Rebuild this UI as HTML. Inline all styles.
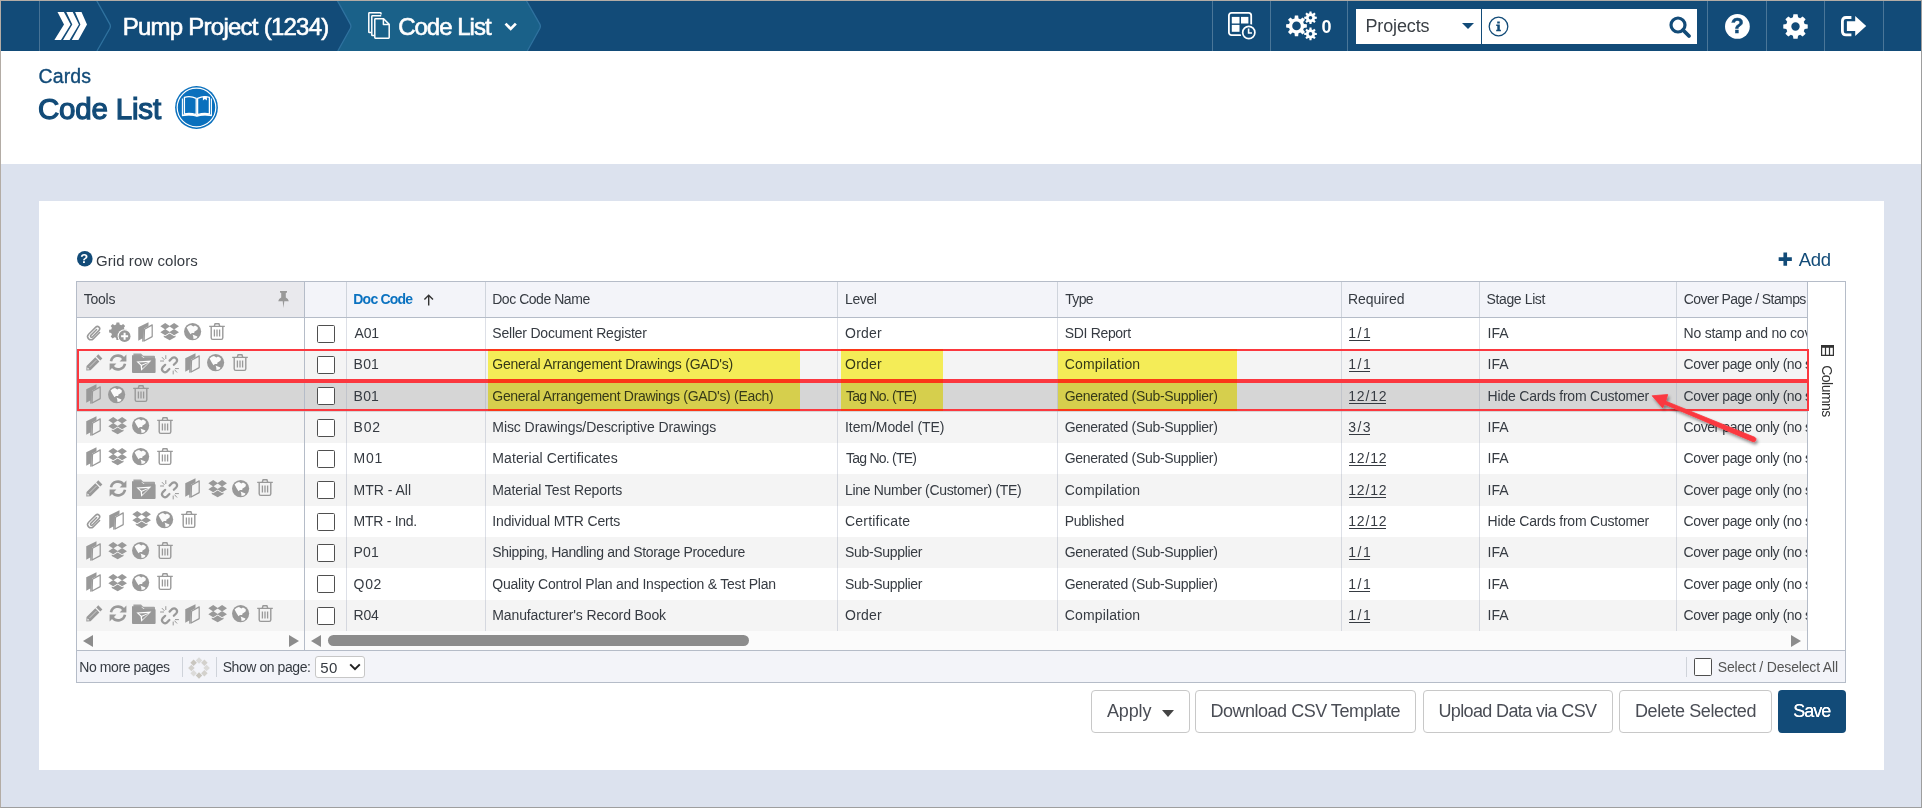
<!DOCTYPE html>
<html lang="en">
<head>
<meta charset="utf-8">
<title>Code List - Pump Project (1234)</title>
<style>
html,body{margin:0;padding:0;}
body{width:1922px;height:808px;position:relative;overflow:hidden;background:#dce2ee;font-family:"Liberation Sans",sans-serif;}
.a{position:absolute;box-sizing:border-box;}
.t{position:absolute;white-space:pre;font-family:"Liberation Sans",sans-serif;}
svg{position:absolute;overflow:visible;}
.u{text-decoration:underline;text-underline-offset:2px;}
.btn{position:absolute;box-sizing:border-box;background:#fff;border:1px solid #c8c8c8;border-radius:4px;}
.cb{position:absolute;box-sizing:border-box;width:18px;height:18px;background:#fff;border:1.4px solid #4f4f4f;border-radius:1.6px;}

</style>
</head>
<body>
<div class="a" style="left:0px;top:0px;width:1922px;height:51px;background:#124b78;"></div>
<svg class="a" style="left:0px;top:0px" width="1922" height="51" viewBox="0 0 1922 51" ><path d="M337,0 H526 L539.7,23.9 Q541,26.2 539.8,28.5 L527.3,51 H337.8 L350.3,28.5 Q351.5,26.2 350.2,23.9Z" fill="#1a6189"/><path d="M39.5,0V51" stroke="rgba(255,255,255,.22)" stroke-width="1" fill="none"/><path d="M96.3,0 L109.7,23.9 Q111,26.2 109.8,28.5 L97,51 M337,0 L350.2,23.9 Q351.5,26.2 350.3,28.5 L337.8,51 M526,0 L539.7,23.9 Q541,26.2 539.8,28.5 L527.3,51" stroke="#2f729f" stroke-width="1.3" fill="none" stroke-linejoin="round"/><path d="M1212.5,0V51" stroke="rgba(255,255,255,.24)" stroke-width="1"/><path d="M1270.5,0V51" stroke="rgba(255,255,255,.24)" stroke-width="1"/><path d="M1347.5,0V51" stroke="rgba(255,255,255,.24)" stroke-width="1"/><path d="M1707.5,0V51" stroke="rgba(255,255,255,.24)" stroke-width="1"/><path d="M1766.5,0V51" stroke="rgba(255,255,255,.24)" stroke-width="1"/><path d="M1824.5,0V51" stroke="rgba(255,255,255,.24)" stroke-width="1"/><path d="M1883.5,0V51" stroke="rgba(255,255,255,.24)" stroke-width="1"/><polygon fill="#fff" points="57.5,12 63.9,12 70.6,24.6 61.0,40 54.4,40 63.99999999999999,24.6"/><polygon fill="#fff" points="66.3,12 72.7,12 78.9,24.6 69.6,40 63.0,40 72.30000000000001,24.6"/><polygon fill="#fff" points="75.1,12 81.5,12 87.0,24.6 78.39999999999999,40 71.8,40 80.4,24.6"/></svg>
<span class="t" style="left:122.70px;top:9.50px;font-size:24px;letter-spacing:-0.750px;line-height:34px;color:#fff;-webkit-text-stroke:0.6px #fff;">Pump Project (1234)</span>
<svg class="a" style="left:368px;top:12px" width="22" height="27" viewBox="0 0 22 27" ><g fill="none" stroke="#fff" stroke-width="1.5" stroke-linejoin="round"><path d="M3.2,20.5 H1.4 Q0.8,20.5 0.8,19.9 V1.4 Q0.8,0.8 1.4,0.8 H12.4 Q13,0.8 13,1.4 V2.6"/><path d="M6.2,23.5 H4.4 Q3.8,23.5 3.8,22.9 V4.4 Q3.8,3.8 4.4,3.8 H13.2"/><path d="M7.4,6.8 H15.6 L21.2,12.4 V25.6 Q21.2,26.2 20.6,26.2 H7.4 Q6.8,26.2 6.8,25.6 V7.4 Q6.8,6.8 7.4,6.8Z" fill="#1a6189"/><path d="M15.4,7 V12.6 H21"/></g></svg>
<span class="t" style="left:398.20px;top:9.50px;font-size:24px;letter-spacing:-1.000px;line-height:34px;color:#fff;-webkit-text-stroke:0.6px #fff;">Code List</span>
<svg class="a" style="left:504px;top:21.6px" width="13.4" height="9.4" viewBox="0 0 13 9" ><path d="M1.5,1.5 L6.5,6.6 L11.5,1.5" fill="none" stroke="#fff" stroke-width="2.7"/></svg>
<svg class="a" style="left:1228px;top:11.5px" width="29" height="29" viewBox="0 0 29 29" ><rect x="0.9" y="0.9" width="22.3" height="22.2" rx="2.6" fill="none" stroke="#fff" stroke-width="1.8"/><rect x="3.8" y="4.9" width="7.7" height="6.6" fill="#fff"/><rect x="13" y="4.9" width="7.4" height="6.6" fill="#fff"/><rect x="3.8" y="12.9" width="7.7" height="6.9" fill="#fff"/><path d="M3.8,4.9 h3 v1.2 h-3Z M13,4.9 h3 v1.2 h-3Z M3.8,12.9 h3 v1.2 h-3Z" fill="#124b78" opacity=".0"/><circle cx="20.8" cy="20.5" r="8.4" fill="#124b78"/><circle cx="20.8" cy="20.5" r="6.1" fill="none" stroke="#fff" stroke-width="1.7"/><path d="M20.6,16.6 V21 H24" fill="none" stroke="#fff" stroke-width="1.6"/></svg>
<svg class="a" style="left:1286px;top:11px" width="31" height="29" viewBox="0 0 31 29" ><path fill="#fff" fill-rule="evenodd" d="M17.94,12.91 L20.87,13.24 L20.87,16.56 L17.94,16.89 L17.17,18.75 L19.00,21.06 L16.66,23.40 L14.35,21.57 L12.49,22.34 L12.16,25.27 L8.84,25.27 L8.51,22.34 L6.65,21.57 L4.34,23.40 L2.00,21.06 L3.83,18.75 L3.06,16.89 L0.13,16.56 L0.13,13.24 L3.06,12.91 L3.83,11.05 L2.00,8.74 L4.34,6.40 L6.65,8.23 L8.51,7.46 L8.84,4.53 L12.16,4.53 L12.49,7.46 L14.35,8.23 L16.66,6.40 L19.00,8.74 L17.17,11.05Z M6.20,14.90a4.30,4.30 0 1,0 8.60,0a4.30,4.30 0 1,0 -8.60,0Z"/><path fill="#fff" fill-rule="evenodd" d="M28.94,5.61 L30.82,5.79 L30.82,7.81 L28.94,7.99 L28.48,9.10 L29.68,10.56 L28.26,11.98 L26.80,10.78 L25.69,11.24 L25.51,13.12 L23.49,13.12 L23.31,11.24 L22.20,10.78 L20.74,11.98 L19.32,10.56 L20.52,9.10 L20.06,7.99 L18.18,7.81 L18.18,5.79 L20.06,5.61 L20.52,4.50 L19.32,3.04 L20.74,1.62 L22.20,2.82 L23.31,2.36 L23.49,0.48 L25.51,0.48 L25.69,2.36 L26.80,2.82 L28.26,1.62 L29.68,3.04 L28.48,4.50Z M22.70,6.80a1.80,1.80 0 1,0 3.60,0a1.80,1.80 0 1,0 -3.60,0Z"/><path fill="#fff" fill-rule="evenodd" d="M28.94,21.71 L30.82,21.89 L30.82,23.91 L28.94,24.09 L28.48,25.20 L29.68,26.66 L28.26,28.08 L26.80,26.88 L25.69,27.34 L25.51,29.22 L23.49,29.22 L23.31,27.34 L22.20,26.88 L20.74,28.08 L19.32,26.66 L20.52,25.20 L20.06,24.09 L18.18,23.91 L18.18,21.89 L20.06,21.71 L20.52,20.60 L19.32,19.14 L20.74,17.72 L22.20,18.92 L23.31,18.46 L23.49,16.58 L25.51,16.58 L25.69,18.46 L26.80,18.92 L28.26,17.72 L29.68,19.14 L28.48,20.60Z M22.70,22.90a1.80,1.80 0 1,0 3.60,0a1.80,1.80 0 1,0 -3.60,0Z"/></svg>
<span class="t" style="left:1321.40px;top:14.90px;font-size:18px;font-weight:700;line-height:25px;color:#fff;">0</span>
<div class="a" style="left:1356px;top:9px;width:125px;height:35px;background:#fff;"></div>
<div class="a" style="left:1482px;top:9px;width:215px;height:35px;background:#fff;"></div>
<span class="t" style="left:1365.50px;top:13.50px;font-size:18px;letter-spacing:-0.143px;line-height:25px;color:#3a3f45;">Projects</span>
<svg class="a" style="left:1462px;top:23px" width="12" height="6" viewBox="0 0 12 6" ><path d="M0,0 H12 L6,6Z" fill="#124b78"/></svg>
<svg class="a" style="left:1487.5px;top:15.5px" width="21" height="21" viewBox="0 0 21 21" ><circle cx="10.5" cy="10.5" r="9.3" fill="none" stroke="#124b78" stroke-width="1.3"/><path d="M8.2,8.6 H11.8 V13.8 H12.9 V15.2 H8.2 V13.8 H9.3 V10 H8.2Z M9.2,5.4 H11.8 V7.6 H9.2Z" fill="#124b78"/></svg>
<svg class="a" style="left:1669px;top:16px" width="22" height="22" viewBox="0 0 22 22" ><circle cx="9" cy="9" r="7" fill="none" stroke="#124b78" stroke-width="3.2"/><path d="M14,14 L20,20" stroke="#124b78" stroke-width="3.8" stroke-linecap="round"/></svg>
<svg class="a" style="left:1724.8px;top:13.6px" width="24.8" height="24.8" viewBox="0 0 25 25" ><circle cx="12.5" cy="12.5" r="12.5" fill="#fff"/></svg>
<span class="t" style="left:1730.70px;top:11.40px;font-size:21.5px;font-weight:700;line-height:30px;color:#124b78;-webkit-text-stroke:0.4px #124b78;">?</span>
<svg class="a" style="left:1782.9px;top:13.5px" width="25" height="25" viewBox="0 0 25 25" ><path fill="#fff" fill-rule="evenodd" d="M21.65,9.94 L24.72,10.41 L24.72,14.59 L21.65,15.06 L20.78,17.15 L22.62,19.66 L19.66,22.62 L17.15,20.78 L15.06,21.65 L14.59,24.72 L10.41,24.72 L9.94,21.65 L7.85,20.78 L5.34,22.62 L2.38,19.66 L4.22,17.15 L3.35,15.06 L0.28,14.59 L0.28,10.41 L3.35,9.94 L4.22,7.85 L2.38,5.34 L5.34,2.38 L7.85,4.22 L9.94,3.35 L10.41,0.28 L14.59,0.28 L15.06,3.35 L17.15,4.22 L19.66,2.38 L22.62,5.34 L20.78,7.85Z M8.30,12.50a4.20,4.20 0 1,0 8.40,0a4.20,4.20 0 1,0 -8.40,0Z"/></svg>
<svg class="a" style="left:1841px;top:14px" width="26" height="23" viewBox="0 0 26 23" ><path d="M10.4,3.5 H5 Q1.4,3.5 1.4,7.1 V17.2 Q1.4,20.8 5,20.8 H10.4" fill="none" stroke="#fff" stroke-width="2.8"/><path d="M5.9,7.3 H14.2 V2 L25.2,12 L14.2,22 V16.9 H5.9Z" fill="#fff"/></svg>
<div class="a" style="left:0px;top:51px;width:1922px;height:113px;background:#fff;"></div>
<span class="t" style="left:38.50px;top:62.80px;font-size:19.5px;letter-spacing:0.125px;line-height:27px;color:#124b78;-webkit-text-stroke:0.35px #124b78;">Cards</span>
<span class="t" style="left:38.00px;top:87.70px;font-size:29.5px;letter-spacing:-0.188px;line-height:41px;color:#124b78;-webkit-text-stroke:1.25px #124b78;">Code List</span>
<svg class="a" style="left:175.15px;top:85.8px" width="43" height="43" viewBox="0 0 43 43" ><circle cx="21.5" cy="21.5" r="21.4" fill="#0a70bd"/><circle cx="21.5" cy="21.5" r="19.3" fill="none" stroke="#fff" stroke-width="1.2"/><g fill="none" stroke="#fff" stroke-linejoin="round"><path d="M9.4,11.4 Q15.4,9.6 21.2,12.4 V28.6 Q15.4,26.6 9.4,27.8Z" stroke-width="1.3"/><path d="M34.4,11.4 Q28.4,9.6 22.6,12.4 V28.6 Q28.4,26.6 34.4,27.8Z" stroke-width="1.3"/><path d="M7.4,12.6 V29.6 Q14.6,28.2 21.9,30.2 Q29.2,28.2 36.4,29.6 V12.6" stroke-width="1.1"/><path d="M8,29.2 Q15,27.6 21.9,29.6 Q28.8,27.6 35.8,29.2" stroke-width="1.4"/></g><path d="M27.9,10.6 H31.9 V14.4 L29.9,13 L27.9,14.4Z" fill="#fff"/></svg>
<div class="a" style="left:39px;top:201px;width:1845px;height:569px;background:#fff;"></div>
<svg class="a" style="left:77.2px;top:250.9px" width="15.6" height="15.6" viewBox="0 0 15 15" ><circle cx="7.5" cy="7.5" r="7.5" fill="#124b78"/></svg>
<span class="t" style="left:80.30px;top:249.90px;font-size:13px;font-weight:700;line-height:18px;color:#fff;">?</span>
<span class="t" style="left:96.00px;top:250.00px;font-size:15px;letter-spacing:0.071px;line-height:21px;color:#363b42;">Grid row colors</span>
<svg class="a" style="left:1778.3px;top:251.8px" width="14.5" height="14.2" viewBox="0 0 14 14" ><path d="M5.2,0.5 H8.8 V5.2 H13.5 V8.8 H8.8 V13.5 H5.2 V8.8 H0.5 V5.2 H5.2Z" fill="#124b78"/></svg>
<span class="t" style="left:1798.70px;top:246.50px;font-size:18.5px;letter-spacing:-0.300px;line-height:26px;color:#124b78;">Add</span>
<div class="a" style="left:76px;top:281px;width:1770px;height:402px;background:#fff;border:1px solid #b5bcc8;"></div>
<div class="a" style="left:77px;top:282px;width:227px;height:35px;background:#e9e9ed;"></div>
<div class="a" style="left:305px;top:282px;width:1502px;height:35px;background:#f3f4f9;"></div>
<div class="a" style="left:77px;top:349px;width:1730px;height:31px;background:#f4f4f4;"></div>
<div class="a" style="left:77px;top:380px;width:1730px;height:32px;background:#d6d6d6;"></div>
<div class="a" style="left:77px;top:412px;width:1730px;height:31px;background:#f4f4f4;"></div>
<div class="a" style="left:77px;top:474px;width:1730px;height:32px;background:#f4f4f4;"></div>
<div class="a" style="left:77px;top:537px;width:1730px;height:31px;background:#f4f4f4;"></div>
<div class="a" style="left:77px;top:600px;width:1730px;height:31px;background:#f4f4f4;"></div>
<div class="a" style="left:77px;top:317px;width:1730px;height:1px;background:#b5bcc8;"></div>
<div class="a" style="left:304px;top:282px;width:1px;height:35px;background:#b5bcc8;"></div>
<div class="a" style="left:304px;top:318px;width:1px;height:333px;background:#b5bcc8;"></div>
<div class="a" style="left:346px;top:282px;width:1px;height:35px;background:#cfd4dc;"></div>
<div class="a" style="left:346px;top:318px;width:1px;height:313px;background:rgba(150,160,180,.32);"></div>
<div class="a" style="left:485px;top:282px;width:1px;height:35px;background:#cfd4dc;"></div>
<div class="a" style="left:485px;top:318px;width:1px;height:313px;background:rgba(150,160,180,.32);"></div>
<div class="a" style="left:837px;top:282px;width:1px;height:35px;background:#cfd4dc;"></div>
<div class="a" style="left:837px;top:318px;width:1px;height:313px;background:rgba(150,160,180,.32);"></div>
<div class="a" style="left:1057px;top:282px;width:1px;height:35px;background:#cfd4dc;"></div>
<div class="a" style="left:1057px;top:318px;width:1px;height:313px;background:rgba(150,160,180,.32);"></div>
<div class="a" style="left:1341px;top:282px;width:1px;height:35px;background:#cfd4dc;"></div>
<div class="a" style="left:1341px;top:318px;width:1px;height:313px;background:rgba(150,160,180,.32);"></div>
<div class="a" style="left:1479px;top:282px;width:1px;height:35px;background:#cfd4dc;"></div>
<div class="a" style="left:1479px;top:318px;width:1px;height:313px;background:rgba(150,160,180,.32);"></div>
<div class="a" style="left:1676px;top:282px;width:1px;height:35px;background:#cfd4dc;"></div>
<div class="a" style="left:1676px;top:318px;width:1px;height:313px;background:rgba(150,160,180,.32);"></div>
<div class="a" style="left:1807px;top:282px;width:1px;height:369px;background:#b5bcc8;"></div>
<div class="a" style="left:77px;top:631px;width:227px;height:20px;background:#fbfbfb;"></div>
<div class="a" style="left:305px;top:631px;width:1502px;height:20px;background:#fbfbfb;"></div>
<div class="a" style="left:77px;top:650px;width:1769px;height:1px;background:#b5bcc8;"></div>
<div class="a" style="left:77px;top:651px;width:1768px;height:31px;background:#f3f4f9;"></div>
<svg class="a" style="left:82.5px;top:635px" width="10" height="12" viewBox="0 0 10 12" ><path d="M10,0 V12 L0,6Z" fill="#8c8c8c"/></svg>
<svg class="a" style="left:289px;top:635px" width="10" height="12" viewBox="0 0 10 12" ><path d="M0,0 V12 L10,6Z" fill="#8c8c8c"/></svg>
<svg class="a" style="left:311px;top:635px" width="10" height="12" viewBox="0 0 10 12" ><path d="M10,0 V12 L0,6Z" fill="#8c8c8c"/></svg>
<svg class="a" style="left:1791px;top:635px" width="10" height="12" viewBox="0 0 10 12" ><path d="M0,0 V12 L10,6Z" fill="#8c8c8c"/></svg>
<div class="a" style="left:328px;top:635px;width:421px;height:11px;background:#8c8c8c;border-radius:6px;"></div>
<span class="t" style="left:83.80px;top:289.20px;font-size:14px;letter-spacing:-0.250px;line-height:20px;color:#363b42;">Tools</span>
<svg class="a" style="left:276.7px;top:291px" width="13" height="17" viewBox="0 0 13 17" ><path fill="#999" d="M3,0 H10 V1.4 L8.8,2 V6.4 Q11.4,7.6 11.8,10.2 H7.3 L6.5,17 L5.7,10.2 H1.2 Q1.6,7.6 4.2,6.4 V2 L3,1.4Z"/></svg>
<span class="t" style="left:353.30px;top:289.20px;font-size:14px;font-weight:700;letter-spacing:-0.786px;line-height:20px;color:#0b72c0;">Doc Code</span>
<svg class="a" style="left:423px;top:293.8px" width="11.4" height="12" viewBox="0 0 11 12" ><path d="M5.5,11.5 V1.5 M1.2,5.6 L5.5,1.3 L9.8,5.6" fill="none" stroke="#333" stroke-width="1.4"/></svg>
<span class="t" style="left:492.20px;top:289.20px;font-size:14px;letter-spacing:-0.458px;line-height:20px;color:#363b42;">Doc Code Name</span>
<span class="t" style="left:845.00px;top:289.20px;font-size:14px;letter-spacing:-0.375px;line-height:20px;color:#363b42;">Level</span>
<span class="t" style="left:1065.20px;top:289.20px;font-size:14px;letter-spacing:-0.633px;line-height:20px;color:#363b42;">Type</span>
<span class="t" style="left:1348.00px;top:289.20px;font-size:14px;letter-spacing:-0.057px;line-height:20px;color:#363b42;">Required</span>
<span class="t" style="left:1486.60px;top:289.20px;font-size:14px;letter-spacing:-0.389px;line-height:20px;color:#363b42;">Stage List</span>
<span class="t" style="left:1683.80px;top:289.20px;font-size:14px;letter-spacing:-0.583px;line-height:20px;color:#363b42;">Cover Page / Stamps</span>
<svg class="a" style="left:86.4px;top:325.1px" width="16" height="17" viewBox="0 0 16 16.5" ><path fill="none" stroke="#999" stroke-width="1.5" stroke-linecap="round" stroke-linejoin="round" d="M13.6,7.2 L7.2,13.6 a3.2,3.2 0 0 1 -4.6,-4.6 L9.8,1.9 a2.2,2.2 0 0 1 3.2,3.2 L6.4,11.7 a1.1,1.1 0 0 1 -1.6,-1.6 L10.6,4.3"/></svg>
<svg class="a" style="left:109.2px;top:321.9px" width="22" height="21" viewBox="0 0 22 21" ><path fill="#999" fill-rule="evenodd" d="M15.57,7.42 L17.69,7.80 L17.69,10.60 L15.57,10.98 L14.87,12.65 L16.11,14.42 L14.12,16.41 L12.35,15.17 L10.68,15.87 L10.30,17.99 L7.50,17.99 L7.12,15.87 L5.45,15.17 L3.68,16.41 L1.69,14.42 L2.93,12.65 L2.23,10.98 L0.11,10.60 L0.11,7.80 L2.23,7.42 L2.93,5.75 L1.69,3.98 L3.68,1.99 L5.45,3.23 L7.12,2.53 L7.50,0.41 L10.30,0.41 L10.68,2.53 L12.35,3.23 L14.12,1.99 L16.11,3.98 L14.87,5.75Z M8.89,9.20a0.01,0.01 0 1,0 0.02,0a0.01,0.01 0 1,0 -0.02,0Z"/><circle cx="15.6" cy="14.2" r="7" fill="#fff"/><circle cx="15.6" cy="14.2" r="5.9" fill="#999"/><path d="M12.1,14.2h7M15.6,10.7v7" stroke="#fff" stroke-width="2"/></svg>
<svg class="a" style="left:137.7px;top:321.9px" width="15" height="20" viewBox="0 0 15 20" ><path fill="#999" d="M0.25,5.25 L10.5,0.25 L10.5,4.3 L6,6.7 L5.6,19.6 L4.2,19.8 L4.2,16.5 L0.25,18.75Z"/><path fill="none" stroke="#999" stroke-width="1.25" stroke-linejoin="round" d="M6.5,7.3 L14.2,2.9 L14.2,14.6 L6.1,19Z"/></svg>
<svg class="a" style="left:160.1px;top:323.0px" width="19.3" height="17.2" viewBox="0 0 19.5 17.4" ><path fill="#999" d="M5.25,0 L10.2,3.25 L5.25,6.5 L0.3,3.25Z M14.25,0 L19.2,3.25 L14.25,6.5 L9.3,3.25Z M5.25,6 L10.2,9.25 L5.25,12.5 L0.3,9.25Z M14.25,6 L19.2,9.25 L14.25,12.5 L9.3,9.25Z"/><path fill="#999" d="M9.75,10.7 L14.3,13.5 L15.7,12.7 V14.1 L9.75,17.4 L3.8,14.1 V12.7 L5.2,13.5Z"/></svg>
<svg class="a" style="left:184.2px;top:323.0px" width="17.2" height="17.2" viewBox="0 0 17.2 17.2" ><circle cx="8.6" cy="8.6" r="8.6" fill="#999"/><path fill="#fff" d="M2.6,4.6 Q4.6,2.4 7,2 L9.4,3.5 L11,2.6 Q13,3.4 14,4.8 L13.4,6.8 L10.3,8.7 L10.3,10 L8,10 L6.5,11.2 L4.6,8.2Z" opacity=".96"/><path fill="#fff" d="M8.6,11.6 L10.3,12.2 L13.5,13.5 Q13,14.8 12,15.5 L9.5,16 L9.25,13.5Z" opacity=".96"/></svg>
<svg class="a" style="left:209.1px;top:322.5px" width="16" height="17" viewBox="0 0 15.6 17" ><path fill="none" stroke="#999" stroke-width="1.4" d="M0,3.4 H15.6 M5,3.2 L5.9,0.8 H9.7 L10.6,3.2 M2,3.6 V14.8 Q2,16.4 3.6,16.4 H12 Q13.6,16.4 13.6,14.8 V3.6"/><path stroke="#999" stroke-width="1.3" d="M5.2,6.4 V13.4 M7.8,6.4 V13.4 M10.4,6.4 V13.4"/></svg>
<div class="cb" style="left:317px;top:324.9px"></div>
<span class="t" style="left:354.60px;top:323.00px;font-size:14px;letter-spacing:-0.200px;line-height:20px;color:#363b42;">A01</span>
<span class="t" style="left:492.30px;top:323.00px;font-size:14px;letter-spacing:-0.217px;line-height:20px;color:#363b42;">Seller Document Register</span>
<span class="t" style="left:845.00px;top:323.00px;font-size:14px;letter-spacing:0.250px;line-height:20px;color:#363b42;">Order</span>
<span class="t" style="left:1064.70px;top:323.00px;font-size:14px;letter-spacing:-0.322px;line-height:20px;color:#363b42;">SDI Report</span>
<div class="a" style="left:1348.9px;top:340px;width:21.3px;height:1px;background:#363b42;"></div>
<span class="t" style="left:1348.20px;top:323.00px;font-size:14px;letter-spacing:1.550px;line-height:20px;color:#363b42;">1/1</span>
<span class="t" style="left:1487.60px;top:323.00px;font-size:14px;letter-spacing:-0.050px;line-height:20px;color:#363b42;">IFA</span>
<span class="t" style="left:1683.60px;top:323.00px;font-size:14px;letter-spacing:-0.250px;line-height:20px;color:#363b42;max-width:123.4px;overflow:hidden;">No stamp and no cov</span>
<svg class="a" style="left:85.7px;top:354.0px" width="17" height="17" viewBox="0 0 17 17" ><path fill="#999" d="M12.3,0.3 L16.4,4.4 L14.3,6.5 L10.2,2.4Z M9.3,3.3 L13.4,7.4 L4.6,16.2 L0.3,16.5 L0.5,12.1Z"/><path fill="#fff" d="M1.6,13.4 L3.4,15.2 L1.3,15.6Z" opacity=".9"/><path stroke="#fff" stroke-width=".8" opacity=".6" d="M3.6,12.9 L10.6,5.9"/></svg>
<svg class="a" style="left:108.7px;top:354.0px" width="18" height="17" viewBox="0 0 18 17" ><path fill="none" stroke="#999" stroke-width="2.6" d="M2,7.2 A7,7 0 0 1 14.4,4.4 M16,9.8 A7,7 0 0 1 3.6,12.6"/><path fill="#999" d="M17.4,0.6 V7.4 H10.6Z M0.6,16.4 V9.6 H7.4Z"/></svg>
<svg class="a" style="left:131.7px;top:353.0px" width="24" height="20" viewBox="0 0 24 20" ><path fill="#999" d="M1.4,0.4 H9 L11.2,2.8 H22 Q23,2.8 23,3.8 V5 H12.6 L10,3 H1.4Z" opacity=".9"/><path fill="#999" d="M0,2.2 H8.6 L11.4,5 H22.6 Q23.6,5 23.6,6 V19 Q23.6,20 22.6,20 H1 Q0,20 0,19Z"/><path fill="#fff" d="M4.4,8.6 L19.4,7.6 L9.2,17.8 L8.6,12.6Z"/><path fill="#999" d="M6.8,9.6 L16.4,8.9 L9.6,11.8Z M10,12.8 L16.8,9.6 L10.2,15.8Z"/></svg>
<svg class="a" style="left:159.7px;top:354.7px" width="19" height="19.5" viewBox="0 0 19 19.5" ><path fill="none" stroke="#999" stroke-width="2.2" stroke-linecap="round" stroke-linejoin="round" d="M9.6,5.6 L12.2,3 a3,3 0 0 1 4.2,4.2 L13.8,9.8 M9.4,14 L6.8,16.6 a3,3 0 0 1 -4.2,-4.2 L5.2,9.8"/><path stroke="#999" stroke-width="1" stroke-linecap="round" d="M5.8,0.6 V3.6 M2.2,2.4 L4.2,4.6 M0.5,6 H3.6 M13.2,19 V16 M16.8,17.2 L14.8,15 M18.5,13.6 H15.4"/></svg>
<svg class="a" style="left:185.2px;top:352.9px" width="15" height="20" viewBox="0 0 15 20" ><path fill="#999" d="M0.25,5.25 L10.5,0.25 L10.5,4.3 L6,6.7 L5.6,19.6 L4.2,19.8 L4.2,16.5 L0.25,18.75Z"/><path fill="none" stroke="#999" stroke-width="1.25" stroke-linejoin="round" d="M6.5,7.3 L14.2,2.9 L14.2,14.6 L6.1,19Z"/></svg>
<svg class="a" style="left:207.1px;top:354.0px" width="17.2" height="17.2" viewBox="0 0 17.2 17.2" ><circle cx="8.6" cy="8.6" r="8.6" fill="#999"/><path fill="#fff" d="M2.6,4.6 Q4.6,2.4 7,2 L9.4,3.5 L11,2.6 Q13,3.4 14,4.8 L13.4,6.8 L10.3,8.7 L10.3,10 L8,10 L6.5,11.2 L4.6,8.2Z" opacity=".96"/><path fill="#fff" d="M8.6,11.6 L10.3,12.2 L13.5,13.5 Q13,14.8 12,15.5 L9.5,16 L9.25,13.5Z" opacity=".96"/></svg>
<svg class="a" style="left:232.0px;top:353.5px" width="16" height="17" viewBox="0 0 15.6 17" ><path fill="none" stroke="#999" stroke-width="1.4" d="M0,3.4 H15.6 M5,3.2 L5.9,0.8 H9.7 L10.6,3.2 M2,3.6 V14.8 Q2,16.4 3.6,16.4 H12 Q13.6,16.4 13.6,14.8 V3.6"/><path stroke="#999" stroke-width="1.3" d="M5.2,6.4 V13.4 M7.8,6.4 V13.4 M10.4,6.4 V13.4"/></svg>
<div class="cb" style="left:317px;top:355.9px"></div>
<span class="t" style="left:353.60px;top:354.00px;font-size:14px;letter-spacing:0.200px;line-height:20px;color:#363b42;">B01</span>
<span class="t" style="left:492.30px;top:354.00px;font-size:14px;letter-spacing:-0.243px;line-height:20px;color:#363b42;">General Arrangement Drawings (GAD&#x27;s)</span>
<span class="t" style="left:845.00px;top:354.00px;font-size:14px;letter-spacing:0.250px;line-height:20px;color:#363b42;">Order</span>
<span class="t" style="left:1064.70px;top:354.00px;font-size:14px;letter-spacing:0.150px;line-height:20px;color:#363b42;">Compilation</span>
<div class="a" style="left:1348.9px;top:371px;width:21.3px;height:1px;background:#363b42;"></div>
<span class="t" style="left:1348.20px;top:354.00px;font-size:14px;letter-spacing:1.550px;line-height:20px;color:#363b42;">1/1</span>
<span class="t" style="left:1487.60px;top:354.00px;font-size:14px;letter-spacing:-0.050px;line-height:20px;color:#363b42;">IFA</span>
<span class="t" style="left:1683.60px;top:354.00px;font-size:14px;letter-spacing:-0.425px;line-height:20px;color:#363b42;max-width:123.4px;overflow:hidden;">Cover page only (no s</span>
<svg class="a" style="left:85.7px;top:384.4px" width="15" height="20" viewBox="0 0 15 20" ><path fill="#999" d="M0.25,5.25 L10.5,0.25 L10.5,4.3 L6,6.7 L5.6,19.6 L4.2,19.8 L4.2,16.5 L0.25,18.75Z"/><path fill="none" stroke="#999" stroke-width="1.25" stroke-linejoin="round" d="M6.5,7.3 L14.2,2.9 L14.2,14.6 L6.1,19Z"/></svg>
<svg class="a" style="left:107.60000000000001px;top:385.5px" width="17.2" height="17.2" viewBox="0 0 17.2 17.2" ><circle cx="8.6" cy="8.6" r="8.6" fill="#999"/><path fill="#fff" d="M2.6,4.6 Q4.6,2.4 7,2 L9.4,3.5 L11,2.6 Q13,3.4 14,4.8 L13.4,6.8 L10.3,8.7 L10.3,10 L8,10 L6.5,11.2 L4.6,8.2Z" opacity=".96"/><path fill="#fff" d="M8.6,11.6 L10.3,12.2 L13.5,13.5 Q13,14.8 12,15.5 L9.5,16 L9.25,13.5Z" opacity=".96"/></svg>
<svg class="a" style="left:132.5px;top:385.0px" width="16" height="17" viewBox="0 0 15.6 17" ><path fill="none" stroke="#999" stroke-width="1.4" d="M0,3.4 H15.6 M5,3.2 L5.9,0.8 H9.7 L10.6,3.2 M2,3.6 V14.8 Q2,16.4 3.6,16.4 H12 Q13.6,16.4 13.6,14.8 V3.6"/><path stroke="#999" stroke-width="1.3" d="M5.2,6.4 V13.4 M7.8,6.4 V13.4 M10.4,6.4 V13.4"/></svg>
<div class="cb" style="left:317px;top:387.4px"></div>
<span class="t" style="left:353.60px;top:385.50px;font-size:14px;letter-spacing:0.200px;line-height:20px;color:#363b42;">B01</span>
<span class="t" style="left:492.30px;top:385.50px;font-size:14px;letter-spacing:-0.310px;line-height:20px;color:#363b42;">General Arrangement Drawings (GAD&#x27;s) (Each)</span>
<span class="t" style="left:846.00px;top:385.50px;font-size:14px;letter-spacing:-0.764px;line-height:20px;color:#363b42;">Tag No. (TE)</span>
<span class="t" style="left:1064.70px;top:385.50px;font-size:14px;letter-spacing:-0.313px;line-height:20px;color:#363b42;">Generated (Sub-Supplier)</span>
<div class="a" style="left:1348.9px;top:403px;width:37.4px;height:1px;background:#363b42;"></div>
<span class="t" style="left:1348.20px;top:385.50px;font-size:14px;letter-spacing:0.850px;line-height:20px;color:#363b42;">12/12</span>
<span class="t" style="left:1487.60px;top:385.50px;font-size:14px;letter-spacing:-0.209px;line-height:20px;color:#363b42;">Hide Cards from Customer</span>
<span class="t" style="left:1683.60px;top:385.50px;font-size:14px;letter-spacing:-0.425px;line-height:20px;color:#363b42;max-width:123.4px;overflow:hidden;">Cover page only (no s</span>
<svg class="a" style="left:85.7px;top:415.9px" width="15" height="20" viewBox="0 0 15 20" ><path fill="#999" d="M0.25,5.25 L10.5,0.25 L10.5,4.3 L6,6.7 L5.6,19.6 L4.2,19.8 L4.2,16.5 L0.25,18.75Z"/><path fill="none" stroke="#999" stroke-width="1.25" stroke-linejoin="round" d="M6.5,7.3 L14.2,2.9 L14.2,14.6 L6.1,19Z"/></svg>
<svg class="a" style="left:108.10000000000001px;top:417.0px" width="19.3" height="17.2" viewBox="0 0 19.5 17.4" ><path fill="#999" d="M5.25,0 L10.2,3.25 L5.25,6.5 L0.3,3.25Z M14.25,0 L19.2,3.25 L14.25,6.5 L9.3,3.25Z M5.25,6 L10.2,9.25 L5.25,12.5 L0.3,9.25Z M14.25,6 L19.2,9.25 L14.25,12.5 L9.3,9.25Z"/><path fill="#999" d="M9.75,10.7 L14.3,13.5 L15.7,12.7 V14.1 L9.75,17.4 L3.8,14.1 V12.7 L5.2,13.5Z"/></svg>
<svg class="a" style="left:132.20000000000002px;top:417.0px" width="17.2" height="17.2" viewBox="0 0 17.2 17.2" ><circle cx="8.6" cy="8.6" r="8.6" fill="#999"/><path fill="#fff" d="M2.6,4.6 Q4.6,2.4 7,2 L9.4,3.5 L11,2.6 Q13,3.4 14,4.8 L13.4,6.8 L10.3,8.7 L10.3,10 L8,10 L6.5,11.2 L4.6,8.2Z" opacity=".96"/><path fill="#fff" d="M8.6,11.6 L10.3,12.2 L13.5,13.5 Q13,14.8 12,15.5 L9.5,16 L9.25,13.5Z" opacity=".96"/></svg>
<svg class="a" style="left:157.10000000000002px;top:416.5px" width="16" height="17" viewBox="0 0 15.6 17" ><path fill="none" stroke="#999" stroke-width="1.4" d="M0,3.4 H15.6 M5,3.2 L5.9,0.8 H9.7 L10.6,3.2 M2,3.6 V14.8 Q2,16.4 3.6,16.4 H12 Q13.6,16.4 13.6,14.8 V3.6"/><path stroke="#999" stroke-width="1.3" d="M5.2,6.4 V13.4 M7.8,6.4 V13.4 M10.4,6.4 V13.4"/></svg>
<div class="cb" style="left:317px;top:418.9px"></div>
<span class="t" style="left:353.60px;top:417.00px;font-size:14px;letter-spacing:0.750px;line-height:20px;color:#363b42;">B02</span>
<span class="t" style="left:492.30px;top:417.00px;font-size:14px;letter-spacing:-0.073px;line-height:20px;color:#363b42;">Misc Drawings/Descriptive Drawings</span>
<span class="t" style="left:845.00px;top:417.00px;font-size:14px;letter-spacing:-0.064px;line-height:20px;color:#363b42;">Item/Model (TE)</span>
<span class="t" style="left:1064.70px;top:417.00px;font-size:14px;letter-spacing:-0.313px;line-height:20px;color:#363b42;">Generated (Sub-Supplier)</span>
<div class="a" style="left:1348.9px;top:434px;width:21.6px;height:1px;background:#363b42;"></div>
<span class="t" style="left:1348.20px;top:417.00px;font-size:14px;letter-spacing:1.500px;line-height:20px;color:#363b42;">3/3</span>
<span class="t" style="left:1487.60px;top:417.00px;font-size:14px;letter-spacing:-0.050px;line-height:20px;color:#363b42;">IFA</span>
<span class="t" style="left:1683.60px;top:417.00px;font-size:14px;letter-spacing:-0.425px;line-height:20px;color:#363b42;max-width:123.4px;overflow:hidden;">Cover page only (no s</span>
<svg class="a" style="left:85.7px;top:446.9px" width="15" height="20" viewBox="0 0 15 20" ><path fill="#999" d="M0.25,5.25 L10.5,0.25 L10.5,4.3 L6,6.7 L5.6,19.6 L4.2,19.8 L4.2,16.5 L0.25,18.75Z"/><path fill="none" stroke="#999" stroke-width="1.25" stroke-linejoin="round" d="M6.5,7.3 L14.2,2.9 L14.2,14.6 L6.1,19Z"/></svg>
<svg class="a" style="left:108.10000000000001px;top:448.0px" width="19.3" height="17.2" viewBox="0 0 19.5 17.4" ><path fill="#999" d="M5.25,0 L10.2,3.25 L5.25,6.5 L0.3,3.25Z M14.25,0 L19.2,3.25 L14.25,6.5 L9.3,3.25Z M5.25,6 L10.2,9.25 L5.25,12.5 L0.3,9.25Z M14.25,6 L19.2,9.25 L14.25,12.5 L9.3,9.25Z"/><path fill="#999" d="M9.75,10.7 L14.3,13.5 L15.7,12.7 V14.1 L9.75,17.4 L3.8,14.1 V12.7 L5.2,13.5Z"/></svg>
<svg class="a" style="left:132.20000000000002px;top:448.0px" width="17.2" height="17.2" viewBox="0 0 17.2 17.2" ><circle cx="8.6" cy="8.6" r="8.6" fill="#999"/><path fill="#fff" d="M2.6,4.6 Q4.6,2.4 7,2 L9.4,3.5 L11,2.6 Q13,3.4 14,4.8 L13.4,6.8 L10.3,8.7 L10.3,10 L8,10 L6.5,11.2 L4.6,8.2Z" opacity=".96"/><path fill="#fff" d="M8.6,11.6 L10.3,12.2 L13.5,13.5 Q13,14.8 12,15.5 L9.5,16 L9.25,13.5Z" opacity=".96"/></svg>
<svg class="a" style="left:157.10000000000002px;top:447.5px" width="16" height="17" viewBox="0 0 15.6 17" ><path fill="none" stroke="#999" stroke-width="1.4" d="M0,3.4 H15.6 M5,3.2 L5.9,0.8 H9.7 L10.6,3.2 M2,3.6 V14.8 Q2,16.4 3.6,16.4 H12 Q13.6,16.4 13.6,14.8 V3.6"/><path stroke="#999" stroke-width="1.3" d="M5.2,6.4 V13.4 M7.8,6.4 V13.4 M10.4,6.4 V13.4"/></svg>
<div class="cb" style="left:317px;top:449.9px"></div>
<span class="t" style="left:353.60px;top:448.00px;font-size:14px;letter-spacing:0.750px;line-height:20px;color:#363b42;">M01</span>
<span class="t" style="left:492.30px;top:448.00px;font-size:14px;letter-spacing:0.085px;line-height:20px;color:#363b42;">Material Certificates</span>
<span class="t" style="left:846.00px;top:448.00px;font-size:14px;letter-spacing:-0.764px;line-height:20px;color:#363b42;">Tag No. (TE)</span>
<span class="t" style="left:1064.70px;top:448.00px;font-size:14px;letter-spacing:-0.313px;line-height:20px;color:#363b42;">Generated (Sub-Supplier)</span>
<div class="a" style="left:1348.9px;top:465px;width:37.4px;height:1px;background:#363b42;"></div>
<span class="t" style="left:1348.20px;top:448.00px;font-size:14px;letter-spacing:0.850px;line-height:20px;color:#363b42;">12/12</span>
<span class="t" style="left:1487.60px;top:448.00px;font-size:14px;letter-spacing:-0.050px;line-height:20px;color:#363b42;">IFA</span>
<span class="t" style="left:1683.60px;top:448.00px;font-size:14px;letter-spacing:-0.425px;line-height:20px;color:#363b42;max-width:123.4px;overflow:hidden;">Cover page only (no s</span>
<svg class="a" style="left:85.7px;top:479.5px" width="17" height="17" viewBox="0 0 17 17" ><path fill="#999" d="M12.3,0.3 L16.4,4.4 L14.3,6.5 L10.2,2.4Z M9.3,3.3 L13.4,7.4 L4.6,16.2 L0.3,16.5 L0.5,12.1Z"/><path fill="#fff" d="M1.6,13.4 L3.4,15.2 L1.3,15.6Z" opacity=".9"/><path stroke="#fff" stroke-width=".8" opacity=".6" d="M3.6,12.9 L10.6,5.9"/></svg>
<svg class="a" style="left:108.7px;top:479.5px" width="18" height="17" viewBox="0 0 18 17" ><path fill="none" stroke="#999" stroke-width="2.6" d="M2,7.2 A7,7 0 0 1 14.4,4.4 M16,9.8 A7,7 0 0 1 3.6,12.6"/><path fill="#999" d="M17.4,0.6 V7.4 H10.6Z M0.6,16.4 V9.6 H7.4Z"/></svg>
<svg class="a" style="left:131.7px;top:478.5px" width="24" height="20" viewBox="0 0 24 20" ><path fill="#999" d="M1.4,0.4 H9 L11.2,2.8 H22 Q23,2.8 23,3.8 V5 H12.6 L10,3 H1.4Z" opacity=".9"/><path fill="#999" d="M0,2.2 H8.6 L11.4,5 H22.6 Q23.6,5 23.6,6 V19 Q23.6,20 22.6,20 H1 Q0,20 0,19Z"/><path fill="#fff" d="M4.4,8.6 L19.4,7.6 L9.2,17.8 L8.6,12.6Z"/><path fill="#999" d="M6.8,9.6 L16.4,8.9 L9.6,11.8Z M10,12.8 L16.8,9.6 L10.2,15.8Z"/></svg>
<svg class="a" style="left:159.7px;top:480.2px" width="19" height="19.5" viewBox="0 0 19 19.5" ><path fill="none" stroke="#999" stroke-width="2.2" stroke-linecap="round" stroke-linejoin="round" d="M9.6,5.6 L12.2,3 a3,3 0 0 1 4.2,4.2 L13.8,9.8 M9.4,14 L6.8,16.6 a3,3 0 0 1 -4.2,-4.2 L5.2,9.8"/><path stroke="#999" stroke-width="1" stroke-linecap="round" d="M5.8,0.6 V3.6 M2.2,2.4 L4.2,4.6 M0.5,6 H3.6 M13.2,19 V16 M16.8,17.2 L14.8,15 M18.5,13.6 H15.4"/></svg>
<svg class="a" style="left:185.2px;top:478.4px" width="15" height="20" viewBox="0 0 15 20" ><path fill="#999" d="M0.25,5.25 L10.5,0.25 L10.5,4.3 L6,6.7 L5.6,19.6 L4.2,19.8 L4.2,16.5 L0.25,18.75Z"/><path fill="none" stroke="#999" stroke-width="1.25" stroke-linejoin="round" d="M6.5,7.3 L14.2,2.9 L14.2,14.6 L6.1,19Z"/></svg>
<svg class="a" style="left:207.6px;top:479.5px" width="19.3" height="17.2" viewBox="0 0 19.5 17.4" ><path fill="#999" d="M5.25,0 L10.2,3.25 L5.25,6.5 L0.3,3.25Z M14.25,0 L19.2,3.25 L14.25,6.5 L9.3,3.25Z M5.25,6 L10.2,9.25 L5.25,12.5 L0.3,9.25Z M14.25,6 L19.2,9.25 L14.25,12.5 L9.3,9.25Z"/><path fill="#999" d="M9.75,10.7 L14.3,13.5 L15.7,12.7 V14.1 L9.75,17.4 L3.8,14.1 V12.7 L5.2,13.5Z"/></svg>
<svg class="a" style="left:231.7px;top:479.5px" width="17.2" height="17.2" viewBox="0 0 17.2 17.2" ><circle cx="8.6" cy="8.6" r="8.6" fill="#999"/><path fill="#fff" d="M2.6,4.6 Q4.6,2.4 7,2 L9.4,3.5 L11,2.6 Q13,3.4 14,4.8 L13.4,6.8 L10.3,8.7 L10.3,10 L8,10 L6.5,11.2 L4.6,8.2Z" opacity=".96"/><path fill="#fff" d="M8.6,11.6 L10.3,12.2 L13.5,13.5 Q13,14.8 12,15.5 L9.5,16 L9.25,13.5Z" opacity=".96"/></svg>
<svg class="a" style="left:256.59999999999997px;top:479.0px" width="16" height="17" viewBox="0 0 15.6 17" ><path fill="none" stroke="#999" stroke-width="1.4" d="M0,3.4 H15.6 M5,3.2 L5.9,0.8 H9.7 L10.6,3.2 M2,3.6 V14.8 Q2,16.4 3.6,16.4 H12 Q13.6,16.4 13.6,14.8 V3.6"/><path stroke="#999" stroke-width="1.3" d="M5.2,6.4 V13.4 M7.8,6.4 V13.4 M10.4,6.4 V13.4"/></svg>
<div class="cb" style="left:317px;top:481.4px"></div>
<span class="t" style="left:353.60px;top:479.50px;font-size:14px;letter-spacing:-0.013px;line-height:20px;color:#363b42;">MTR - All</span>
<span class="t" style="left:492.30px;top:479.50px;font-size:14px;letter-spacing:-0.100px;line-height:20px;color:#363b42;">Material Test Reports</span>
<span class="t" style="left:845.00px;top:479.50px;font-size:14px;letter-spacing:-0.327px;line-height:20px;color:#363b42;">Line Number (Customer) (TE)</span>
<span class="t" style="left:1064.70px;top:479.50px;font-size:14px;letter-spacing:0.150px;line-height:20px;color:#363b42;">Compilation</span>
<div class="a" style="left:1348.9px;top:497px;width:37.4px;height:1px;background:#363b42;"></div>
<span class="t" style="left:1348.20px;top:479.50px;font-size:14px;letter-spacing:0.850px;line-height:20px;color:#363b42;">12/12</span>
<span class="t" style="left:1487.60px;top:479.50px;font-size:14px;letter-spacing:-0.050px;line-height:20px;color:#363b42;">IFA</span>
<span class="t" style="left:1683.60px;top:479.50px;font-size:14px;letter-spacing:-0.425px;line-height:20px;color:#363b42;max-width:123.4px;overflow:hidden;">Cover page only (no s</span>
<svg class="a" style="left:86.4px;top:513.1px" width="16" height="17" viewBox="0 0 16 16.5" ><path fill="none" stroke="#999" stroke-width="1.5" stroke-linecap="round" stroke-linejoin="round" d="M13.6,7.2 L7.2,13.6 a3.2,3.2 0 0 1 -4.6,-4.6 L9.8,1.9 a2.2,2.2 0 0 1 3.2,3.2 L6.4,11.7 a1.1,1.1 0 0 1 -1.6,-1.6 L10.6,4.3"/></svg>
<svg class="a" style="left:109.2px;top:509.9px" width="15" height="20" viewBox="0 0 15 20" ><path fill="#999" d="M0.25,5.25 L10.5,0.25 L10.5,4.3 L6,6.7 L5.6,19.6 L4.2,19.8 L4.2,16.5 L0.25,18.75Z"/><path fill="none" stroke="#999" stroke-width="1.25" stroke-linejoin="round" d="M6.5,7.3 L14.2,2.9 L14.2,14.6 L6.1,19Z"/></svg>
<svg class="a" style="left:131.6px;top:511.0px" width="19.3" height="17.2" viewBox="0 0 19.5 17.4" ><path fill="#999" d="M5.25,0 L10.2,3.25 L5.25,6.5 L0.3,3.25Z M14.25,0 L19.2,3.25 L14.25,6.5 L9.3,3.25Z M5.25,6 L10.2,9.25 L5.25,12.5 L0.3,9.25Z M14.25,6 L19.2,9.25 L14.25,12.5 L9.3,9.25Z"/><path fill="#999" d="M9.75,10.7 L14.3,13.5 L15.7,12.7 V14.1 L9.75,17.4 L3.8,14.1 V12.7 L5.2,13.5Z"/></svg>
<svg class="a" style="left:155.7px;top:511.0px" width="17.2" height="17.2" viewBox="0 0 17.2 17.2" ><circle cx="8.6" cy="8.6" r="8.6" fill="#999"/><path fill="#fff" d="M2.6,4.6 Q4.6,2.4 7,2 L9.4,3.5 L11,2.6 Q13,3.4 14,4.8 L13.4,6.8 L10.3,8.7 L10.3,10 L8,10 L6.5,11.2 L4.6,8.2Z" opacity=".96"/><path fill="#fff" d="M8.6,11.6 L10.3,12.2 L13.5,13.5 Q13,14.8 12,15.5 L9.5,16 L9.25,13.5Z" opacity=".96"/></svg>
<svg class="a" style="left:180.6px;top:510.5px" width="16" height="17" viewBox="0 0 15.6 17" ><path fill="none" stroke="#999" stroke-width="1.4" d="M0,3.4 H15.6 M5,3.2 L5.9,0.8 H9.7 L10.6,3.2 M2,3.6 V14.8 Q2,16.4 3.6,16.4 H12 Q13.6,16.4 13.6,14.8 V3.6"/><path stroke="#999" stroke-width="1.3" d="M5.2,6.4 V13.4 M7.8,6.4 V13.4 M10.4,6.4 V13.4"/></svg>
<div class="cb" style="left:317px;top:512.9px"></div>
<span class="t" style="left:353.60px;top:511.00px;font-size:14px;letter-spacing:-0.278px;line-height:20px;color:#363b42;">MTR - Ind.</span>
<span class="t" style="left:492.30px;top:511.00px;font-size:14px;letter-spacing:-0.142px;line-height:20px;color:#363b42;">Individual MTR Certs</span>
<span class="t" style="left:845.00px;top:511.00px;font-size:14px;letter-spacing:0.200px;line-height:20px;color:#363b42;">Certificate</span>
<span class="t" style="left:1064.70px;top:511.00px;font-size:14px;letter-spacing:-0.250px;line-height:20px;color:#363b42;">Published</span>
<div class="a" style="left:1348.9px;top:528px;width:37.4px;height:1px;background:#363b42;"></div>
<span class="t" style="left:1348.20px;top:511.00px;font-size:14px;letter-spacing:0.850px;line-height:20px;color:#363b42;">12/12</span>
<span class="t" style="left:1487.60px;top:511.00px;font-size:14px;letter-spacing:-0.209px;line-height:20px;color:#363b42;">Hide Cards from Customer</span>
<span class="t" style="left:1683.60px;top:511.00px;font-size:14px;letter-spacing:-0.425px;line-height:20px;color:#363b42;max-width:123.4px;overflow:hidden;">Cover page only (no s</span>
<svg class="a" style="left:85.7px;top:540.9px" width="15" height="20" viewBox="0 0 15 20" ><path fill="#999" d="M0.25,5.25 L10.5,0.25 L10.5,4.3 L6,6.7 L5.6,19.6 L4.2,19.8 L4.2,16.5 L0.25,18.75Z"/><path fill="none" stroke="#999" stroke-width="1.25" stroke-linejoin="round" d="M6.5,7.3 L14.2,2.9 L14.2,14.6 L6.1,19Z"/></svg>
<svg class="a" style="left:108.10000000000001px;top:542.0px" width="19.3" height="17.2" viewBox="0 0 19.5 17.4" ><path fill="#999" d="M5.25,0 L10.2,3.25 L5.25,6.5 L0.3,3.25Z M14.25,0 L19.2,3.25 L14.25,6.5 L9.3,3.25Z M5.25,6 L10.2,9.25 L5.25,12.5 L0.3,9.25Z M14.25,6 L19.2,9.25 L14.25,12.5 L9.3,9.25Z"/><path fill="#999" d="M9.75,10.7 L14.3,13.5 L15.7,12.7 V14.1 L9.75,17.4 L3.8,14.1 V12.7 L5.2,13.5Z"/></svg>
<svg class="a" style="left:132.20000000000002px;top:542.0px" width="17.2" height="17.2" viewBox="0 0 17.2 17.2" ><circle cx="8.6" cy="8.6" r="8.6" fill="#999"/><path fill="#fff" d="M2.6,4.6 Q4.6,2.4 7,2 L9.4,3.5 L11,2.6 Q13,3.4 14,4.8 L13.4,6.8 L10.3,8.7 L10.3,10 L8,10 L6.5,11.2 L4.6,8.2Z" opacity=".96"/><path fill="#fff" d="M8.6,11.6 L10.3,12.2 L13.5,13.5 Q13,14.8 12,15.5 L9.5,16 L9.25,13.5Z" opacity=".96"/></svg>
<svg class="a" style="left:157.10000000000002px;top:541.5px" width="16" height="17" viewBox="0 0 15.6 17" ><path fill="none" stroke="#999" stroke-width="1.4" d="M0,3.4 H15.6 M5,3.2 L5.9,0.8 H9.7 L10.6,3.2 M2,3.6 V14.8 Q2,16.4 3.6,16.4 H12 Q13.6,16.4 13.6,14.8 V3.6"/><path stroke="#999" stroke-width="1.3" d="M5.2,6.4 V13.4 M7.8,6.4 V13.4 M10.4,6.4 V13.4"/></svg>
<div class="cb" style="left:317px;top:543.9px"></div>
<span class="t" style="left:353.60px;top:542.00px;font-size:14px;letter-spacing:0.100px;line-height:20px;color:#363b42;">P01</span>
<span class="t" style="left:492.30px;top:542.00px;font-size:14px;letter-spacing:-0.338px;line-height:20px;color:#363b42;">Shipping, Handling and Storage Procedure</span>
<span class="t" style="left:845.00px;top:542.00px;font-size:14px;letter-spacing:-0.318px;line-height:20px;color:#363b42;">Sub-Supplier</span>
<span class="t" style="left:1064.70px;top:542.00px;font-size:14px;letter-spacing:-0.313px;line-height:20px;color:#363b42;">Generated (Sub-Supplier)</span>
<div class="a" style="left:1348.9px;top:559px;width:21.3px;height:1px;background:#363b42;"></div>
<span class="t" style="left:1348.20px;top:542.00px;font-size:14px;letter-spacing:1.550px;line-height:20px;color:#363b42;">1/1</span>
<span class="t" style="left:1487.60px;top:542.00px;font-size:14px;letter-spacing:-0.050px;line-height:20px;color:#363b42;">IFA</span>
<span class="t" style="left:1683.60px;top:542.00px;font-size:14px;letter-spacing:-0.425px;line-height:20px;color:#363b42;max-width:123.4px;overflow:hidden;">Cover page only (no s</span>
<svg class="a" style="left:85.7px;top:572.4px" width="15" height="20" viewBox="0 0 15 20" ><path fill="#999" d="M0.25,5.25 L10.5,0.25 L10.5,4.3 L6,6.7 L5.6,19.6 L4.2,19.8 L4.2,16.5 L0.25,18.75Z"/><path fill="none" stroke="#999" stroke-width="1.25" stroke-linejoin="round" d="M6.5,7.3 L14.2,2.9 L14.2,14.6 L6.1,19Z"/></svg>
<svg class="a" style="left:108.10000000000001px;top:573.5px" width="19.3" height="17.2" viewBox="0 0 19.5 17.4" ><path fill="#999" d="M5.25,0 L10.2,3.25 L5.25,6.5 L0.3,3.25Z M14.25,0 L19.2,3.25 L14.25,6.5 L9.3,3.25Z M5.25,6 L10.2,9.25 L5.25,12.5 L0.3,9.25Z M14.25,6 L19.2,9.25 L14.25,12.5 L9.3,9.25Z"/><path fill="#999" d="M9.75,10.7 L14.3,13.5 L15.7,12.7 V14.1 L9.75,17.4 L3.8,14.1 V12.7 L5.2,13.5Z"/></svg>
<svg class="a" style="left:132.20000000000002px;top:573.5px" width="17.2" height="17.2" viewBox="0 0 17.2 17.2" ><circle cx="8.6" cy="8.6" r="8.6" fill="#999"/><path fill="#fff" d="M2.6,4.6 Q4.6,2.4 7,2 L9.4,3.5 L11,2.6 Q13,3.4 14,4.8 L13.4,6.8 L10.3,8.7 L10.3,10 L8,10 L6.5,11.2 L4.6,8.2Z" opacity=".96"/><path fill="#fff" d="M8.6,11.6 L10.3,12.2 L13.5,13.5 Q13,14.8 12,15.5 L9.5,16 L9.25,13.5Z" opacity=".96"/></svg>
<svg class="a" style="left:157.10000000000002px;top:573.0px" width="16" height="17" viewBox="0 0 15.6 17" ><path fill="none" stroke="#999" stroke-width="1.4" d="M0,3.4 H15.6 M5,3.2 L5.9,0.8 H9.7 L10.6,3.2 M2,3.6 V14.8 Q2,16.4 3.6,16.4 H12 Q13.6,16.4 13.6,14.8 V3.6"/><path stroke="#999" stroke-width="1.3" d="M5.2,6.4 V13.4 M7.8,6.4 V13.4 M10.4,6.4 V13.4"/></svg>
<div class="cb" style="left:317px;top:575.4px"></div>
<span class="t" style="left:353.60px;top:573.50px;font-size:14px;letter-spacing:0.650px;line-height:20px;color:#363b42;">Q02</span>
<span class="t" style="left:492.30px;top:573.50px;font-size:14px;letter-spacing:-0.220px;line-height:20px;color:#363b42;">Quality Control Plan and Inspection &amp; Test Plan</span>
<span class="t" style="left:845.00px;top:573.50px;font-size:14px;letter-spacing:-0.318px;line-height:20px;color:#363b42;">Sub-Supplier</span>
<span class="t" style="left:1064.70px;top:573.50px;font-size:14px;letter-spacing:-0.313px;line-height:20px;color:#363b42;">Generated (Sub-Supplier)</span>
<div class="a" style="left:1348.9px;top:591px;width:21.3px;height:1px;background:#363b42;"></div>
<span class="t" style="left:1348.20px;top:573.50px;font-size:14px;letter-spacing:1.550px;line-height:20px;color:#363b42;">1/1</span>
<span class="t" style="left:1487.60px;top:573.50px;font-size:14px;letter-spacing:-0.050px;line-height:20px;color:#363b42;">IFA</span>
<span class="t" style="left:1683.60px;top:573.50px;font-size:14px;letter-spacing:-0.425px;line-height:20px;color:#363b42;max-width:123.4px;overflow:hidden;">Cover page only (no s</span>
<svg class="a" style="left:85.7px;top:605.0px" width="17" height="17" viewBox="0 0 17 17" ><path fill="#999" d="M12.3,0.3 L16.4,4.4 L14.3,6.5 L10.2,2.4Z M9.3,3.3 L13.4,7.4 L4.6,16.2 L0.3,16.5 L0.5,12.1Z"/><path fill="#fff" d="M1.6,13.4 L3.4,15.2 L1.3,15.6Z" opacity=".9"/><path stroke="#fff" stroke-width=".8" opacity=".6" d="M3.6,12.9 L10.6,5.9"/></svg>
<svg class="a" style="left:108.7px;top:605.0px" width="18" height="17" viewBox="0 0 18 17" ><path fill="none" stroke="#999" stroke-width="2.6" d="M2,7.2 A7,7 0 0 1 14.4,4.4 M16,9.8 A7,7 0 0 1 3.6,12.6"/><path fill="#999" d="M17.4,0.6 V7.4 H10.6Z M0.6,16.4 V9.6 H7.4Z"/></svg>
<svg class="a" style="left:131.7px;top:604.0px" width="24" height="20" viewBox="0 0 24 20" ><path fill="#999" d="M1.4,0.4 H9 L11.2,2.8 H22 Q23,2.8 23,3.8 V5 H12.6 L10,3 H1.4Z" opacity=".9"/><path fill="#999" d="M0,2.2 H8.6 L11.4,5 H22.6 Q23.6,5 23.6,6 V19 Q23.6,20 22.6,20 H1 Q0,20 0,19Z"/><path fill="#fff" d="M4.4,8.6 L19.4,7.6 L9.2,17.8 L8.6,12.6Z"/><path fill="#999" d="M6.8,9.6 L16.4,8.9 L9.6,11.8Z M10,12.8 L16.8,9.6 L10.2,15.8Z"/></svg>
<svg class="a" style="left:159.7px;top:605.7px" width="19" height="19.5" viewBox="0 0 19 19.5" ><path fill="none" stroke="#999" stroke-width="2.2" stroke-linecap="round" stroke-linejoin="round" d="M9.6,5.6 L12.2,3 a3,3 0 0 1 4.2,4.2 L13.8,9.8 M9.4,14 L6.8,16.6 a3,3 0 0 1 -4.2,-4.2 L5.2,9.8"/><path stroke="#999" stroke-width="1" stroke-linecap="round" d="M5.8,0.6 V3.6 M2.2,2.4 L4.2,4.6 M0.5,6 H3.6 M13.2,19 V16 M16.8,17.2 L14.8,15 M18.5,13.6 H15.4"/></svg>
<svg class="a" style="left:185.2px;top:603.9px" width="15" height="20" viewBox="0 0 15 20" ><path fill="#999" d="M0.25,5.25 L10.5,0.25 L10.5,4.3 L6,6.7 L5.6,19.6 L4.2,19.8 L4.2,16.5 L0.25,18.75Z"/><path fill="none" stroke="#999" stroke-width="1.25" stroke-linejoin="round" d="M6.5,7.3 L14.2,2.9 L14.2,14.6 L6.1,19Z"/></svg>
<svg class="a" style="left:207.6px;top:605.0px" width="19.3" height="17.2" viewBox="0 0 19.5 17.4" ><path fill="#999" d="M5.25,0 L10.2,3.25 L5.25,6.5 L0.3,3.25Z M14.25,0 L19.2,3.25 L14.25,6.5 L9.3,3.25Z M5.25,6 L10.2,9.25 L5.25,12.5 L0.3,9.25Z M14.25,6 L19.2,9.25 L14.25,12.5 L9.3,9.25Z"/><path fill="#999" d="M9.75,10.7 L14.3,13.5 L15.7,12.7 V14.1 L9.75,17.4 L3.8,14.1 V12.7 L5.2,13.5Z"/></svg>
<svg class="a" style="left:231.7px;top:605.0px" width="17.2" height="17.2" viewBox="0 0 17.2 17.2" ><circle cx="8.6" cy="8.6" r="8.6" fill="#999"/><path fill="#fff" d="M2.6,4.6 Q4.6,2.4 7,2 L9.4,3.5 L11,2.6 Q13,3.4 14,4.8 L13.4,6.8 L10.3,8.7 L10.3,10 L8,10 L6.5,11.2 L4.6,8.2Z" opacity=".96"/><path fill="#fff" d="M8.6,11.6 L10.3,12.2 L13.5,13.5 Q13,14.8 12,15.5 L9.5,16 L9.25,13.5Z" opacity=".96"/></svg>
<svg class="a" style="left:256.59999999999997px;top:604.5px" width="16" height="17" viewBox="0 0 15.6 17" ><path fill="none" stroke="#999" stroke-width="1.4" d="M0,3.4 H15.6 M5,3.2 L5.9,0.8 H9.7 L10.6,3.2 M2,3.6 V14.8 Q2,16.4 3.6,16.4 H12 Q13.6,16.4 13.6,14.8 V3.6"/><path stroke="#999" stroke-width="1.3" d="M5.2,6.4 V13.4 M7.8,6.4 V13.4 M10.4,6.4 V13.4"/></svg>
<div class="cb" style="left:317px;top:606.9px"></div>
<span class="t" style="left:353.60px;top:605.00px;font-size:14px;letter-spacing:-0.200px;line-height:20px;color:#363b42;">R04</span>
<span class="t" style="left:492.30px;top:605.00px;font-size:14px;letter-spacing:-0.128px;line-height:20px;color:#363b42;">Manufacturer&#x27;s Record Book</span>
<span class="t" style="left:845.00px;top:605.00px;font-size:14px;letter-spacing:0.250px;line-height:20px;color:#363b42;">Order</span>
<span class="t" style="left:1064.70px;top:605.00px;font-size:14px;letter-spacing:0.150px;line-height:20px;color:#363b42;">Compilation</span>
<div class="a" style="left:1348.9px;top:622px;width:21.3px;height:1px;background:#363b42;"></div>
<span class="t" style="left:1348.20px;top:605.00px;font-size:14px;letter-spacing:1.550px;line-height:20px;color:#363b42;">1/1</span>
<span class="t" style="left:1487.60px;top:605.00px;font-size:14px;letter-spacing:-0.050px;line-height:20px;color:#363b42;">IFA</span>
<span class="t" style="left:1683.60px;top:605.00px;font-size:14px;letter-spacing:-0.425px;line-height:20px;color:#363b42;max-width:123.4px;overflow:hidden;">Cover page only (no s</span>
<span class="t" style="left:79.30px;top:657.20px;font-size:14px;letter-spacing:-0.417px;line-height:20px;color:#363b42;">No more pages</span>
<div class="a" style="left:182px;top:657px;width:1px;height:20px;background:#cfd3da;"></div>
<div class="a" style="left:216px;top:657px;width:1px;height:20px;background:#cfd3da;"></div>
<svg class="a" style="left:189px;top:657.5px" width="20" height="20" viewBox="0 0 20 20" ><rect x="-2.3" y="-2.3" width="4.6" height="4.6" fill="#c9c6bf" opacity="0.55" transform="translate(17.60,10.00) rotate(45)"/><rect x="-2.3" y="-2.3" width="4.6" height="4.6" fill="#c9c6bf" opacity="0.78" transform="translate(15.37,15.37) rotate(45)"/><rect x="-2.3" y="-2.3" width="4.6" height="4.6" fill="#c9c6bf" opacity="1.00" transform="translate(10.00,17.60) rotate(45)"/><rect x="-2.3" y="-2.3" width="4.6" height="4.6" fill="#c9c6bf" opacity="0.55" transform="translate(4.63,15.37) rotate(45)"/><rect x="-2.3" y="-2.3" width="4.6" height="4.6" fill="#c9c6bf" opacity="0.78" transform="translate(2.40,10.00) rotate(45)"/><rect x="-2.3" y="-2.3" width="4.6" height="4.6" fill="#c9c6bf" opacity="1.00" transform="translate(4.63,4.63) rotate(45)"/><rect x="-2.3" y="-2.3" width="4.6" height="4.6" fill="#c9c6bf" opacity="0.55" transform="translate(10.00,2.40) rotate(45)"/><rect x="-2.3" y="-2.3" width="4.6" height="4.6" fill="#c9c6bf" opacity="0.78" transform="translate(15.37,4.63) rotate(45)"/></svg>
<span class="t" style="left:222.70px;top:657.20px;font-size:14px;letter-spacing:-0.433px;line-height:20px;color:#363b42;">Show on page:</span>
<div class="a" style="left:314.5px;top:656px;width:50.5px;height:22px;background:#fff;border:1px solid #c7c7c7;border-radius:3px;"></div>
<span class="t" style="left:320.20px;top:656.50px;font-size:15px;letter-spacing:0.500px;line-height:21px;color:#363b42;">50</span>
<svg class="a" style="left:348.5px;top:663px" width="12" height="8" viewBox="0 0 12 8" ><path d="M1.2,1.4 L6,6.2 L10.8,1.4" fill="none" stroke="#222" stroke-width="2"/></svg>
<div class="a" style="left:1685.5px;top:657px;width:1px;height:20px;background:#cfd3da;"></div>
<div class="cb" style="left:1694px;top:658px"></div>
<span class="t" style="left:1717.80px;top:657.20px;font-size:14px;letter-spacing:-0.175px;line-height:20px;color:#555;">Select / Deselect All</span>
<div class="a" style="left:1808px;top:282px;width:37px;height:368px;background:#fff;"></div>
<svg class="a" style="left:1820.7px;top:344.9px" width="13" height="11" viewBox="0 0 13 11" ><path d="M0.6,0.6 H12.4 V10.4 H0.6Z M4.5,2 V10.4 M8.5,2 V10.4" fill="none" stroke="#333" stroke-width="1.2"/><rect x="0" y="0" width="13" height="2.8" fill="#333"/></svg>
<div class="a" style="left:1826.6px;top:391.2px;width:0;height:0"><span class="t" style="left:0;top:0;transform:translate(-50%,-50%) rotate(90deg);font-size:14px;letter-spacing:-0.500px;line-height:20px;color:#333;">Columns</span></div>
<div class="a" style="left:77px;top:349px;width:1732px;height:32px;border:2px solid #fb383f;"></div>
<div class="a" style="left:77px;top:381px;width:1732px;height:30px;border:2px solid #fb383f;"></div>
<div class="a" style="left:488px;top:349px;width:312px;height:62px;background:#fff75b;mix-blend-mode:multiply;"></div>
<div class="a" style="left:841px;top:349px;width:102px;height:62px;background:#fff75b;mix-blend-mode:multiply;"></div>
<div class="a" style="left:1058px;top:349px;width:179px;height:62px;background:#fff75b;mix-blend-mode:multiply;"></div>
<svg class="a" style="left:0px;top:0px" width="1922" height="808" viewBox="0 0 1922 808" style="pointer-events:none"><defs><filter id="ash" x="-10%" y="-30%" width="120%" height="170%"><feDropShadow dx="1.6" dy="2.4" stdDeviation="1.5" flood-color="#000" flood-opacity=".42"/></filter></defs><g filter="url(#ash)"><path d="M1652.1,395.8 L1667.7,394.5 L1665.8,401.2 L1754.8,437.3 A2.4,2.4 0 0 1 1753,441.7 L1664.5,404.2 L1662.7,407.9Z" fill="#fb383f" stroke="#fb383f" stroke-width=".8" stroke-linejoin="round"/></g></svg>
<div class="btn" style="left:1091px;top:690px;width:98.7px;height:43px"></div>
<div class="btn" style="left:1195px;top:690px;width:220.5px;height:43px"></div>
<div class="btn" style="left:1423px;top:690px;width:189.6px;height:43px"></div>
<div class="btn" style="left:1619px;top:690px;width:152.8px;height:43px"></div>
<div class="a" style="left:1778px;top:690px;width:68px;height:43px;background:#124b78;border-radius:4px;"></div>
<span class="t" style="left:1107.00px;top:698.90px;font-size:18px;letter-spacing:-0.150px;line-height:25px;color:#4a4d55;">Apply</span>
<svg class="a" style="left:1162px;top:709.5px" width="12" height="7" viewBox="0 0 12 7" ><path d="M0,0 H12 L6,7Z" fill="#444"/></svg>
<span class="t" style="left:1210.50px;top:698.90px;font-size:18px;letter-spacing:-0.490px;line-height:25px;color:#4a4d55;">Download CSV Template</span>
<span class="t" style="left:1438.50px;top:698.90px;font-size:18px;letter-spacing:-0.639px;line-height:25px;color:#4a4d55;">Upload Data via CSV</span>
<span class="t" style="left:1635.00px;top:698.90px;font-size:18px;letter-spacing:-0.400px;line-height:25px;color:#4a4d55;">Delete Selected</span>
<span class="t" style="left:1793.30px;top:698.90px;font-size:18px;letter-spacing:-1.000px;line-height:25px;color:#fff;text-shadow:0 0 .6px #fff;">Save</span>
<div class="a" style="left:0px;top:0px;width:1922px;height:808px;border:1px solid #9e9e9e;border-top-color:#b3aca5;border-left-color:#b3aca5;pointer-events:none;"></div>
</body>
</html>
